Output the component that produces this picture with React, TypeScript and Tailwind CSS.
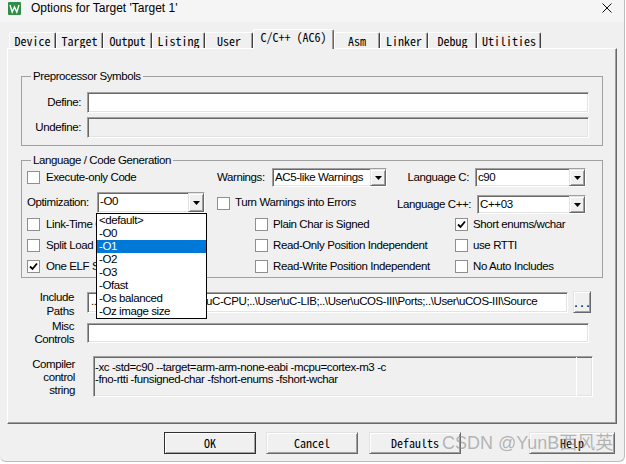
const ui = "font-['Liberation_Sans',Arial,sans-serif] text-[11.5px] tracking-[-0.4px] text-black";
const mono = "font-['Noto_Sans_Mono_CJK_SC','Liberation_Mono',monospace] text-[12px] tracking-normal";
const sunken =
  'border border-t-[#a0a0a0] border-l-[#a0a0a0] border-r-white border-b-white shadow-[inset_1px_1px_0_#696969,inset_-1px_-1px_0_#e3e3e3]';
const raised =
  'border border-t-[#e3e3e3] border-l-[#e3e3e3] border-r-[#696969] border-b-[#696969] shadow-[inset_1px_1px_0_#fff,inset_-1px_-1px_0_#a0a0a0]';

const tabs = [
  { name: 'Device', w: 'w-[47px]' },
  { name: 'Target', w: 'w-[47px]' },
  { name: 'Output', w: 'w-[49px]' },
  { name: 'Listing', w: 'w-[53px]' },
  { name: 'User', w: 'w-[48px]' },
  { name: 'C/C++ (AC6)', w: 'w-[81px]', active: true },
  { name: 'Asm', w: 'w-[46px]' },
  { name: 'Linker', w: 'w-[48px]' },
  { name: 'Debug', w: 'w-[49px]' },
  { name: 'Utilities', w: 'w-[64px]' },
];

const optLevels = ['<default>', '-O0', '-O1', '-O2', '-O3', '-Ofast', '-Os balanced', '-Oz image size'];

function Check({ checked }: { checked?: boolean }) {
  return (
    <span className="w-[13px] h-[13px] shrink-0 bg-white border border-[#8f8f8f] flex items-center justify-center">
      {checked && (
        <svg width="9" height="9" viewBox="0 0 9 9">
          <path d="M1 4.5 L3.5 7 L8 1.5" fill="none" stroke="#000" strokeWidth="1.8" />
        </svg>
      )}
    </span>
  );
}

function CheckItem({ label, checked, className = '' }: { label: string; checked?: boolean; className?: string }) {
  return (
    <div className={`flex items-center gap-[5px] whitespace-nowrap ${className}`}>
      <Check checked={checked} />
      <span>{label}</span>
    </div>
  );
}

function Combo({ value, className = '' }: { value: string; className?: string }) {
  return (
    <div className={`flex bg-white ${sunken} ${className}`}>
      <span className="flex-1 pl-[2px] leading-[15px] pt-[1px] whitespace-nowrap overflow-hidden">{value}</span>
      <span className={`w-[16px] bg-[#f0f0f0] flex items-center justify-center ${raised}`}>
        <svg width="7" height="4" viewBox="0 0 7 4">
          <path d="M0 0h7L3.5 4z" fill="#000" />
        </svg>
      </span>
    </div>
  );
}

function Button({ label, className = '' }: { label: string; className?: string }) {
  return (
    <div className={`h-[22px] bg-[#f0f0f0] flex items-center justify-center ${raised} ${mono} ${className}`}>
      {label}
    </div>
  );
}

export default function App() {
  return (
    <div className={`w-[626px] h-[464px] bg-white overflow-hidden relative ${ui}`}>
      <div className="w-[625px] h-[462px] bg-[#f0f0f0] border-r border-b border-[#bdbdbd] rounded-b-[6px] flex flex-col">
        {/* title bar */}
        <div className="h-[22px] bg-[#f5f5f5] flex items-start pt-[1px] pl-[8px] pr-[12px]">
          <svg width="13" height="13" viewBox="0 0 13 13" className="mt-[1px]">
            <rect width="13" height="13" rx="1" fill="#2f8f46" />
            <path d="M2 3 L4.2 10 L6.5 5 L8.8 10 L11 3" fill="none" stroke="#fff" strokeWidth="1.4" />
          </svg>
          <span className="ml-[10px] font-['Liberation_Sans',sans-serif] text-[12px] tracking-normal leading-[14px]">
            Options for Target 'Target 1'
          </span>
          <svg width="10" height="10" viewBox="0 0 10 10" className="ml-auto mt-[2px]">
            <path d="M0.5 0.5 L9.5 9.5 M9.5 0.5 L0.5 9.5" stroke="#111" strokeWidth="1" />
          </svg>
        </div>

        {/* tabs */}
        <div className={`mt-[7px] h-[19px] pl-[9px] flex items-end ${mono}`}>
          {tabs.map((t) =>
            t.active ? (
              <div
                key={t.name}
                className={`${t.w} h-[20px] -mb-[1px] relative z-10 bg-[#f0f0f0] border-t border-l border-t-white border-l-white border-r border-r-[#696969] shadow-[inset_-1px_0_0_#a0a0a0] rounded-t-[2px] text-center leading-[12px] pt-[1px] whitespace-nowrap`}
              >
                {t.name}
              </div>
            ) : (
              <div
                key={t.name}
                className={`${t.w} h-[16px] border-t border-l border-t-white border-l-white border-r border-r-[#404040] shadow-[inset_-1px_0_0_#a0a0a0] rounded-t-[2px] text-center leading-[12px] pt-[2px] whitespace-nowrap`}
              >
                {t.name}
              </div>
            )
          )}
        </div>

        {/* tab page */}
        <div className="ml-[7px] w-[610px] h-[376px] border-t border-l border-t-white border-l-white border-r border-b border-r-[#696969] border-b-[#696969] shadow-[inset_-1px_-1px_0_#a0a0a0] flex flex-col pl-[13px]">
          <fieldset className="mt-[20px] w-[582px] border border-[#a0a0a0] p-0">
            <legend className="ml-[9px] px-[2px] leading-[14px] h-[14px]">Preprocessor Symbols</legend>
            <div className="flex flex-col gap-[4px] pt-[9px] pb-[7px]">
              <div className="flex items-center gap-[6px]">
                <span className="w-[59px] text-right">Define:</span>
                <div className={`w-[502px] h-[21px] bg-white ${sunken}`} />
              </div>
              <div className="flex items-center gap-[6px]">
                <span className="w-[59px] text-right">Undefine:</span>
                <div className={`w-[502px] h-[21px] bg-[#f0f0f0] ${sunken}`} />
              </div>
            </div>
          </fieldset>

          <fieldset className="mt-[7px] w-[582px] border border-[#a0a0a0] p-0">
            <legend className="ml-[9px] px-[2px] leading-[14px] h-[14px]">Language / Code Generation</legend>
            <div className="flex flex-col pl-[5px] pt-[1px]">
              <div className="flex items-center h-[19px]">
                <CheckItem label="Execute-only Code" className="w-[190px] gap-[6px]" />
                <div className="w-[180px] flex items-center">
                  <span className="w-[55px] whitespace-nowrap">Warnings:</span>
                  <Combo value="AC5-like Warnings" className="w-[115px] h-[19px]" />
                </div>
                <div className="w-[189px] flex items-center justify-end gap-[6px] whitespace-nowrap">
                  <span>Language C:</span>
                  <Combo value="c90" className="w-[111px] h-[19px]" />
                </div>
              </div>
              <div className="flex items-center h-[22px] mt-[5px]">
                <div className="w-[190px] h-full flex items-start">
                  <span className="w-[70px] leading-[21px] whitespace-nowrap">Optimization:</span>
                  <Combo value="-O0" className="w-[108px] h-[21px]" />
                </div>
                <CheckItem label="Turn Warnings into Errors" className="w-[180px]" />
                <div className="w-[189px] h-full flex items-end justify-end gap-[6px] whitespace-nowrap">
                  <span className="leading-[19px]">Language C++:</span>
                  <Combo value="C++03" className="w-[111px] h-[19px]" />
                </div>
              </div>
              <div className="flex items-center h-[21px]">
                <CheckItem label="Link-Time Optimization" className="w-[228px] gap-[6px]" />
                <CheckItem label="Plain Char is Signed" className="w-[200px]" />
                <CheckItem label="Short enums/wchar" checked />
              </div>
              <div className="flex items-center h-[21px]">
                <CheckItem label="Split Load and Store Multiple" className="w-[228px] gap-[6px]" />
                <CheckItem label="Read-Only Position Independent" className="w-[200px]" />
                <CheckItem label="use RTTI" />
              </div>
              <div className="flex items-center h-[21px]">
                <CheckItem label="One ELF Section per Function" checked className="w-[228px] gap-[6px]" />
                <CheckItem label="Read-Write Position Independent" className="w-[200px]" />
                <CheckItem label="No Auto Includes" />
              </div>
            </div>
          </fieldset>

          <div className="mt-[12px] flex items-start">
            <span className="w-[53px] text-right leading-[14px]">
              Include
              <br />
              Paths
            </span>
            <div className={`ml-[13px] mt-[2px] w-[481px] h-[21px] bg-white ${sunken} pl-[3px] leading-[17px] whitespace-nowrap overflow-hidden`}>
              ..\User\uCOS-III\Source\uC-CPU;..\User\uC-LIB;..\User\uCOS-III\Ports;..\User\uCOS-III\Source
            </div>
            <Button label="..." className="ml-[5px] mt-[1px] w-[18px] font-['Liberation_Sans',sans-serif] text-[10px]" />
          </div>

          <div className="mt-[2px] flex items-start">
            <span className="w-[53px] text-right leading-[13px]">
              Misc
              <br />
              Controls
            </span>
            <div className={`ml-[13px] mt-[3px] w-[502px] h-[20px] bg-white ${sunken}`} />
          </div>

          <div className="mt-[10px] flex items-start">
            <span className="w-[54px] mt-[2px] text-right leading-[13px]">
              Compiler
              <br />
              control
              <br />
              string
            </span>
            <div className={`ml-[18px] w-[500px] h-[41px] flex bg-[#f0f0f0] ${sunken}`}>
              <div className="flex-1 pl-[1px] pt-[4px] leading-[12px] whitespace-nowrap">
                -xc -std=c90 --target=arm-arm-none-eabi -mcpu=cortex-m3 -c
                <br />
                -fno-rtti -funsigned-char -fshort-enums -fshort-wchar
              </div>
              <div className="w-[16px] border-l border-white" />
            </div>
          </div>
        </div>

        {/* buttons */}
        <div className="mt-[8px] flex pl-[164px]">
          <Button label="OK" className="w-[92px] outline outline-1 outline-[#303030] -outline-offset-1" />
          <Button label="Cancel" className="ml-[10px] w-[92px]" />
          <Button label="Defaults" className="ml-[11px] w-[92px]" />
          <Button label="Help" className="ml-[68px] w-[86px]" />
        </div>
      </div>

      {/* open optimization list */}
      <div className="absolute left-[96px] top-[213px] w-[111px] bg-white border border-black flex flex-col">
        {optLevels.map((o) => (
          <span
            key={o}
            className={`h-[13px] leading-[13px] pl-[2px] whitespace-nowrap ${o === '-O1' ? 'bg-[#0078d7] text-white' : ''}`}
          >
            {o}
          </span>
        ))}
      </div>

      <span className="absolute left-[442px] top-[433px] text-[18px] leading-[20px] tracking-normal text-[#8a8a8a]/60 font-['Liberation_Sans','Noto_Sans_CJK_SC',sans-serif] whitespace-nowrap pointer-events-none">
        CSDN @YunB西风英
      </span>
    </div>
  );
}
